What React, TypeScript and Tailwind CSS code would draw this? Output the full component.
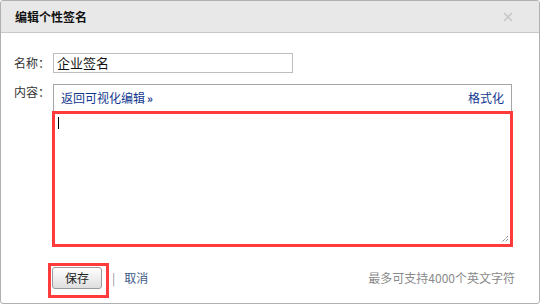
export default function App() {
  return (
    <div className="w-[540px] h-[307px] bg-white font-['Noto_Sans_CJK_SC',sans-serif] text-[12px] text-[#333]">
      <div className="h-[304px] w-[540px] border border-[#b0b0b0] rounded-[3px] overflow-hidden flex flex-col">
        {/* Header */}
        <div className="h-[32px] shrink-0 bg-[#e8e8e8] border-b border-[#c8c8c8] flex items-center justify-between pl-[14px] pr-[26px]">
          <span className="font-bold text-[12px] text-[#111]">编辑个性签名</span>
          <svg width="10" height="10" viewBox="0 0 10 10" className="text-[#c8c8c8]">
            <path d="M1 1 L9 9 M9 1 L1 9" stroke="currentColor" strokeWidth="1.6" />
          </svg>
        </div>

        {/* Body */}
        <div className="flex-1 pl-[13px] pr-[26px] pt-[20px]">
          <div className="flex items-center">
            <span className="w-[39px] shrink-0">名称：</span>
            <div className="w-[240px] h-[20px] border border-[#bdbdbd] pl-[3px] flex items-center text-[13px] text-[#111]">
              企业签名
            </div>
          </div>

          <div className="flex mt-[11px]">
            <span className="w-[38px] shrink-0 -mt-[1px]">内容：</span>
            <div className="w-[461px] flex flex-col">
              <div className="mx-[1px] h-[27px] border-t border-x border-[#a6a6a6] flex items-center justify-between pl-[7px] pr-[7px] text-[#12388f]">
                <span className="flex items-center">
                  返回可视化编辑
                  <span className="ml-[2px] text-[11px] font-bold">»</span>
                </span>
                <span>格式化</span>
              </div>
              <div className="relative h-[136px] border-[3px] border-[#ff3b3b] pl-[3px] pt-[3px]">
                <div className="w-[1px] h-[12px] bg-black" />
                <svg width="8" height="8" viewBox="0 0 8 8" className="absolute right-[1px] bottom-[1px]">
                  <path d="M7 1 L1 7 M7 4 L4 7" stroke="#555" strokeWidth="1" strokeDasharray="1 1" />
                </svg>
              </div>
            </div>
          </div>

          {/* Footer */}
          <div className="flex items-center mt-[16px] pl-[34px]">
            <div className="w-[61px] h-[35px] border-[3px] border-[#ff3b3b] pl-[1px] pt-[1px]">
              <button className="w-[50px] h-[22px] border border-[#9a9a9a] rounded-[3px] bg-gradient-to-b from-white to-[#dedede] text-[12px] text-[#222] flex items-center justify-center">
                保存
              </button>
            </div>
            <span className="ml-[3px] text-[#8a8fa0] -mt-[6px]">|</span>
            <span className="ml-[9px] text-[#3d5a86] -mt-[6px]">取消</span>
            <span className="ml-auto text-[#8a8a8a] -mt-[6px] mr-[-2px]">最多可支持4000个英文字符</span>
          </div>
        </div>
      </div>
    </div>
  );
}
